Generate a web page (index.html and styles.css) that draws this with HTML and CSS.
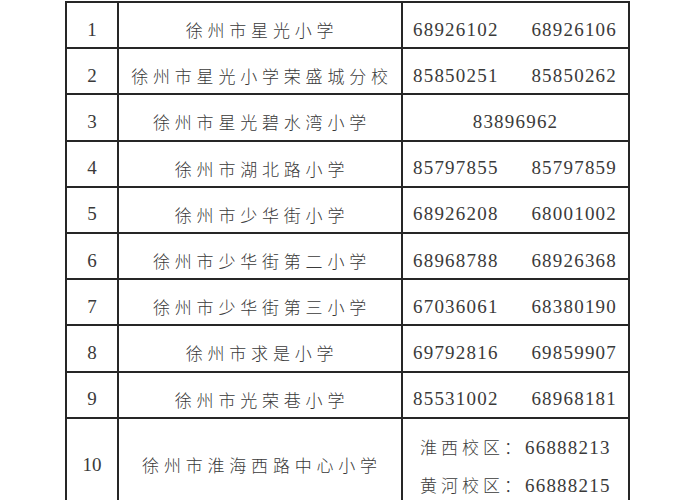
FILE: index.html
```html
<!DOCTYPE html>
<html lang="zh">
<head>
<meta charset="utf-8">
<link rel="stylesheet" href="styles.css">
</head>
<body>
<div class="page">
<table class="list">
  <colgroup><col class="c-no"><col class="c-name"><col class="c-tel"></colgroup>
  <tr><td class="no">1</td><td class="name">徐州市星光小学</td><td class="tel"><div class="pair"><span>68926102</span><span>68926106</span></div></td></tr>
  <tr><td class="no">2</td><td class="name">徐州市星光小学荣盛城分校</td><td class="tel"><div class="pair"><span>85850251</span><span>85850262</span></div></td></tr>
  <tr><td class="no">3</td><td class="name">徐州市星光碧水湾小学</td><td class="tel"><div class="single">83896962</div></td></tr>
  <tr><td class="no">4</td><td class="name">徐州市湖北路小学</td><td class="tel"><div class="pair"><span>85797855</span><span>85797859</span></div></td></tr>
  <tr><td class="no">5</td><td class="name">徐州市少华街小学</td><td class="tel"><div class="pair"><span>68926208</span><span>68001002</span></div></td></tr>
  <tr><td class="no">6</td><td class="name">徐州市少华街第二小学</td><td class="tel"><div class="pair"><span>68968788</span><span>68926368</span></div></td></tr>
  <tr><td class="no">7</td><td class="name">徐州市少华街第三小学</td><td class="tel"><div class="pair"><span>67036061</span><span>68380190</span></div></td></tr>
  <tr><td class="no">8</td><td class="name">徐州市求是小学</td><td class="tel"><div class="pair"><span>69792816</span><span>69859907</span></div></td></tr>
  <tr><td class="no">9</td><td class="name">徐州市光荣巷小学</td><td class="tel"><div class="pair"><span>85531002</span><span>68968181</span></div></td></tr>
  <tr class="tall"><td class="no">10</td><td class="name">徐州市淮海西路中心小学</td><td class="tel"><div class="multi"><div><span class="cn">淮西校区：</span>66888213</div><div><span class="cn">黄河校区：</span>66888215</div></div></td></tr>
</table>
</div>
</body>
</html>
```
FILE: styles.css
```css
html, body {
  margin: 0;
  padding: 0;
  background: #ffffff;
  overflow: hidden;
}
.page {
  width: 700px;
  height: 500px;
  padding: 1px 0 0 65px;
  box-sizing: border-box;
}
.list {
  border-collapse: collapse;
  table-layout: fixed;
  width: 565px;
  color: #3a3a3a;
}
.c-no { width: 52px; }
.c-name { width: 284px; }
.c-tel { width: 227px; }
.list tr { height: 46.2px; }
.list tr.tall { height: 94px; }
.list td {
  border: 2px solid #262626;
  padding: 9px 0 0 0;
  vertical-align: middle;
}
.list tr.tall td { padding-top: 0; }
.list tr.tall td.tel { padding-top: 3px; }
.no {
  text-align: center;
  font-family: "Liberation Serif", serif;
  font-size: 19px;
}
.name {
  text-align: center;
  font-family: "Noto Sans CJK SC", sans-serif;
  font-size: 17px;
  font-weight: 300;
  letter-spacing: 4.8px;
  text-indent: 4px;
}
.tel {
  font-family: "Liberation Serif", serif;
  font-size: 19px;
  letter-spacing: 1.2px;
}
.pair {
  display: flex;
  justify-content: space-between;
  padding: 0 11px 0 10px;
}
.single {
  text-align: center;
}
.multi {
  display: flex;
  flex-direction: column;
  gap: 13px;
  padding: 0 0 0 17px;
}
.multi > div { line-height: 24px; }
.cn {
  font-family: "Noto Sans CJK SC", sans-serif;
  font-size: 17px;
  font-weight: 300;
  letter-spacing: 4px;
}
```
